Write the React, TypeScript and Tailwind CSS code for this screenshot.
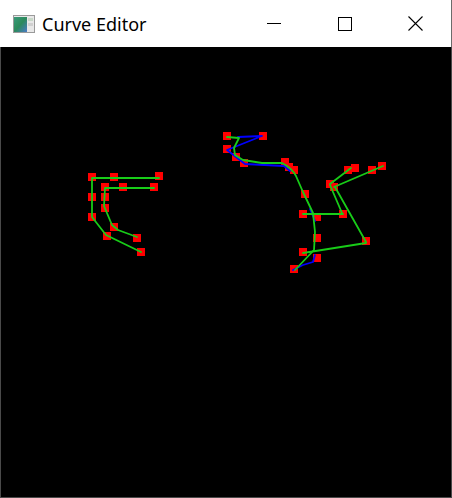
import React from "react";

const markers: [number, number][] = [
  [92, 177], [114, 177], [159, 176], [105, 187], [123, 187], [154, 187],
  [92, 197], [105, 197], [105, 208], [92, 217], [114, 227], [107, 236],
  [137, 238], [141, 252],
  [227, 136], [263, 136], [227, 149], [236, 157], [244, 163], [285, 162],
  [289, 167], [294, 170],
  [305, 194], [303, 214], [317, 217], [343, 214], [317, 238], [303, 252],
  [317, 258], [294, 269], [366, 241], [330, 184], [334, 187], [348, 170],
  [355, 168], [372, 170], [382, 166],
];

const green = "#18cc18";
const blue = "#0000ff";

function Canvas() {
  return (
    <svg width={450} height={449} viewBox="1 47 450 449" className="block">
      <g fill="#ff0000">
        {markers.map(([x, y], i) => (
          <rect key={i} x={x - 4} y={y - 4} width={8} height={8} />
        ))}
      </g>
      <g fill="none" strokeWidth={1.8} strokeLinejoin="round" strokeLinecap="round">
        {/* left figure */}
        <path d="M159 178 L92 178 L92 217 L106 235 L141 252" stroke={green} />
        <path d="M154 188 L105 188 L104 206 L112 225 L118 230 L137 237" stroke={green} />
        {/* middle blue control polygon */}
        <path d="M238 137 L262 136 L227 150 L245 164 L284 166 L290 171" stroke={blue} />
        <path d="M310 209 L315 221" stroke={blue} />
        <path d="M315 255 L313 262 L303 265 L293 270" stroke={blue} />
        {/* main green curve */}
        <path
          d="M227 137 L239 138 L234 148 L235 155 L243 160 L262 163 L282 163 Q292 168 296 176 L303 192 L313 213 L315 232 L314 250 L295 270"
          stroke={green}
        />
        {/* right figure */}
        <path d="M303 214 L343 214" stroke={green} />
        <path d="M342 213 L330 185" stroke={green} />
        <path d="M335 187 L366 242" stroke={green} />
        <path d="M366 243 L303 253" stroke={green} />
        <path d="M330 184 L351 168" stroke={green} />
        <path d="M334 187 L383 166" stroke={green} />
      </g>
    </svg>
  );
}

export default function App() {
  return (
    <div
      className="w-[452px] h-[498px] flex flex-col bg-white"
      style={{ fontFamily: '"Noto Sans", "Open Sans", sans-serif' }}
    >
      <div className="h-[47px] flex items-center bg-white border-r border-[#6b6b6b]">
        <svg width={22} height={18} viewBox="0 0 22 18" className="ml-[13px]">
          <defs>
            <linearGradient id="g1" x1="0" y1="0" x2="1" y2="1">
              <stop offset="0" stopColor="#3a9a7a" />
              <stop offset="0.5" stopColor="#2c8a5c" />
              <stop offset="1" stopColor="#4a7ac8" />
            </linearGradient>
          </defs>
          <rect x={0.5} y={0.5} width={21} height={17} fill="#e8e8e8" stroke="#9a9a9a" />
          <rect x={1} y={2} width={13} height={15} fill="url(#g1)" />
          <rect x={15} y={3} width={5} height={3} fill="#c8d8c8" />
          <rect x={15} y={8} width={5} height={3} fill="#d0d0d0" />
        </svg>
        <span className="ml-[7px] text-[18px] leading-none text-black">Curve Editor</span>
        <div className="ml-auto flex h-full">
          <div className="w-[71px] h-full flex items-center justify-center">
            <div className="w-[14px] h-px bg-black" />
          </div>
          <div className="w-[71px] h-full flex items-center justify-center">
            <div className="w-[14px] h-[14px] border border-black" />
          </div>
          <div className="w-[71px] h-full flex items-center justify-center">
            <svg width={15} height={15} viewBox="0 0 15 15">
              <path d="M0.5 0.5 L14.5 14.5 M14.5 0.5 L0.5 14.5" stroke="#000" strokeWidth={1.1} />
            </svg>
          </div>
        </div>
      </div>
      <div className="flex-1 bg-black border-l border-r border-b border-[#4a4a4a] overflow-hidden">
        <Canvas />
      </div>
    </div>
  );
}
